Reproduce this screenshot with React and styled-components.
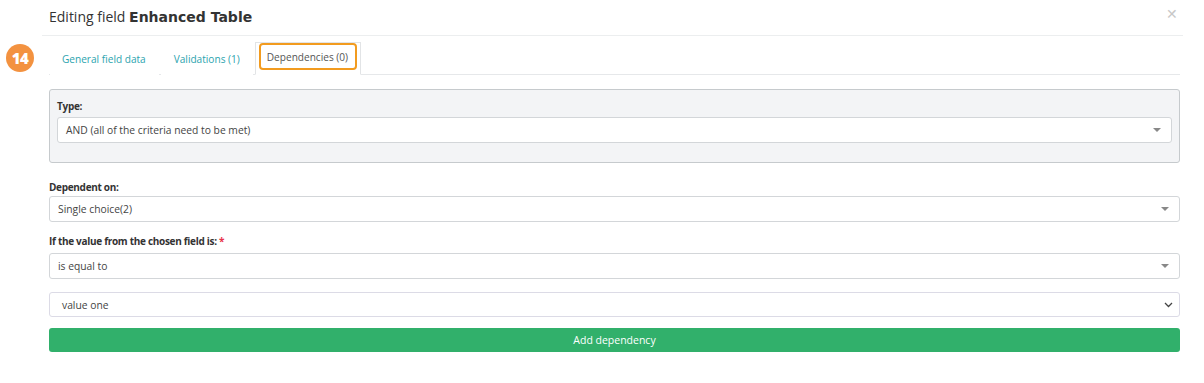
import React from "react";
import styled, { createGlobalStyle } from "styled-components";

const Global = createGlobalStyle`
  html, body { margin: 0; padding: 0; background: #fff; }
  body { font-family: "Open Sans", "Noto Sans", sans-serif; color: #333; }
  * { box-sizing: border-box; }
`;

const Page = styled.div`
  position: relative;
  width: 1204px;
  height: 383px;
  padding-left: 42px;
`;

const Modal = styled.div`
  width: 1141px;
`;

const Header = styled.div`
  height: 36px;
  border-bottom: 1px solid #eceeef;
  display: flex;
  align-items: center;
  justify-content: space-between;
  padding: 0 5px 2px 7px;
`;

const Title = styled.h4`
  margin: 0;
  font-size: 14px;
  font-weight: 400;
  color: #333;
  b {
    font-family: "DejaVu Sans", "Open Sans", sans-serif;
    font-size: 14px;
    font-weight: 700;
  }
`;

const Close = styled.span`
  color: #c8c8c8;
  font-size: 14px;
  line-height: 1;
  margin-top: -5px;
`;

const Body = styled.div`
  padding: 6px 3px 0 7px;
`;

const Tabs = styled.div`
  display: flex;
  height: 33px;
  border-bottom: 1px solid #e6e8ea;
  padding-left: 1px;
`;

const Tab = styled.div`
  display: flex;
  align-items: center;
  padding: 0 ${p => (p.$active ? "3px" : "12px")};
  margin-right: 2px;
  font-size: 10.1px;
  color: ${p => (p.$active ? "#555" : "#2ba3ae")};
  border: 1px solid ${p => (p.$active ? "#e2e4e6" : "transparent")};
  border-bottom: ${p => (p.$active ? "1px solid #fff" : "none")};
  margin-bottom: -1px;
  background: #fff;
  &:first-child { padding-left: 11px; }
`;

const Highlight = styled.span`
  display: flex;
  align-items: center;
  height: 27px;
  margin-top: -4px;
  padding: 0 7px 0 6px;
  border: 2px solid #f29b1f;
  border-radius: 4px;
`;

const Badge = styled.div`
  position: absolute;
  left: 6px;
  top: 44px;
  width: 28px;
  height: 28px;
  border-radius: 50%;
  background: #f39240;
  color: #fff;
  font-weight: 800;
  font-size: 15px;
  display: flex;
  align-items: center;
  justify-content: center;
  letter-spacing: -0.5px;
`;

const Panel = styled.div`
  margin-top: 14px;
  background: #f3f4f6;
  border: 1px solid #c6cacd;
  border-radius: 3px;
  padding: 9px 7px 19px 7px;
`;

const Label = styled.div`
  font-size: 10px;
  font-weight: 700;
  letter-spacing: -0.3px;
  color: #333;
  line-height: 14px;
  margin: ${p => p.$mt || "0"} 0 ${p => p.$mb || "4px"} 0;
  span { color: #e8334a; }
`;

const Select = styled.div`
  height: 26px;
  background: #fff;
  border: 1px solid #d3d6d9;
  border-radius: 3px;
  display: flex;
  align-items: center;
  justify-content: space-between;
  padding: 0 8px 0 8px;
  font-size: 10.3px;
  color: #444;
  margin-bottom: ${p => p.$mb || "0"};
`;

const Caret = styled.span`
  width: 0;
  height: 0;
  border-left: 4px solid transparent;
  border-right: 4px solid transparent;
  border-top: 4px solid #888;
  margin-right: 2px;
`;

const Native = styled(Select)`
  padding-left: 12px;
  padding-right: 6px;
  border-color: #dcdbe6;
  height: 25px;
`;

const Button = styled.div`
  margin-top: 11px;
  height: 24px;
  background: #31b06b;
  border-radius: 3px;
  color: #fff;
  font-size: 10.5px;
  display: flex;
  align-items: center;
  justify-content: center;
`;

export default function App() {
  return (
    <>
      <Global />
      <Page>
        <Badge>14</Badge>
        <Modal>
          <Header>
            <Title>
              Editing field <b>Enhanced Table</b>
            </Title>
            <Close>✕</Close>
          </Header>
          <Body>
            <Tabs>
              <Tab>General field data</Tab>
              <Tab>Validations (1)</Tab>
              <Tab $active>
                <Highlight>Dependencies (0)</Highlight>
              </Tab>
            </Tabs>
            <Panel>
              <Label>Type:</Label>
              <Select>
                AND (all of the criteria need to be met)
                <Caret />
              </Select>
            </Panel>
            <Label $mt="17px" $mb="2px">Dependent on:</Label>
            <Select>
              Single choice(2)
              <Caret />
            </Select>
            <Label $mt="12px" $mb="5px">
              If the value from the chosen field is: <span>*</span>
            </Label>
            <Select $mb="13px">
              is equal to
              <Caret />
            </Select>
            <Native>
              value one
              <svg width="9" height="6" viewBox="0 0 9 6">
                <path d="M1 1l3.5 3.5L8 1" fill="none" stroke="#444" strokeWidth="1.3" />
              </svg>
            </Native>
            <Button>Add dependency</Button>
          </Body>
        </Modal>
      </Page>
    </>
  );
}
